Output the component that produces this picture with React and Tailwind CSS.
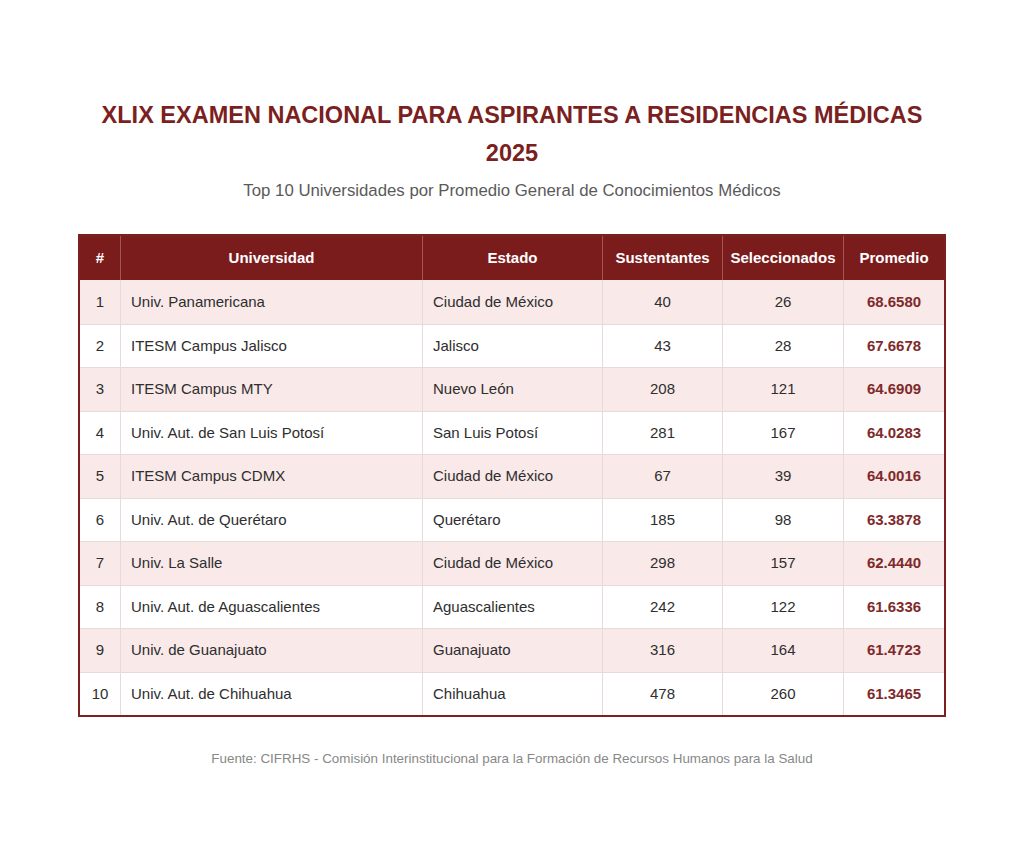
import React from "react";

const rows = [
  ["1", "Univ. Panamericana", "Ciudad de México", "40", "26", "68.6580"],
  ["2", "ITESM Campus Jalisco", "Jalisco", "43", "28", "67.6678"],
  ["3", "ITESM Campus MTY", "Nuevo León", "208", "121", "64.6909"],
  ["4", "Univ. Aut. de San Luis Potosí", "San Luis Potosí", "281", "167", "64.0283"],
  ["5", "ITESM Campus CDMX", "Ciudad de México", "67", "39", "64.0016"],
  ["6", "Univ. Aut. de Querétaro", "Querétaro", "185", "98", "63.3878"],
  ["7", "Univ. La Salle", "Ciudad de México", "298", "157", "62.4440"],
  ["8", "Univ. Aut. de Aguascalientes", "Aguascalientes", "242", "122", "61.6336"],
  ["9", "Univ. de Guanajuato", "Guanajuato", "316", "164", "61.4723"],
  ["10", "Univ. Aut. de Chihuahua", "Chihuahua", "478", "260", "61.3465"],
];

const cols = "grid grid-cols-[40px_302px_180px_120px_121px_101px]";

export default function App() {
  return (
    <div className="w-[1024px] h-[844px] bg-white flex flex-col items-center font-['Liberation_Sans',Arial,sans-serif]">
      <h1 className="mt-[96px] text-center text-[23.5px] leading-[38px] font-bold text-[#7b1f1f]">
        XLIX EXAMEN NACIONAL PARA ASPIRANTES A RESIDENCIAS MÉDICAS
        <br />
        2025
      </h1>
      <p className="mt-[7px] text-[16.8px] leading-[24px] text-[#5a5a5a]">
        Top 10 Universidades por Promedio General de Conocimientos Médicos
      </p>
      <div className="mt-[31px] w-[868px] border-2 border-[#7b1f1f] text-[15px] text-[#2e2e2e]">
        <div className={`${cols} h-[44px] bg-[#7b1c1c] text-white font-bold`}>
          <div className="flex items-center justify-center">#</div>
          <div className="flex items-center justify-center border-l border-[#a65555]">Universidad</div>
          <div className="flex items-center justify-center border-l border-[#a65555]">Estado</div>
          <div className="flex items-center justify-center border-l border-[#a65555]">Sustentantes</div>
          <div className="flex items-center justify-center border-l border-[#a65555]">Seleccionados</div>
          <div className="flex items-center justify-center border-l border-[#a65555]">Promedio</div>
        </div>
        {rows.map((r, i) => (
          <div
            key={r[0]}
            className={`${cols} h-[43.5px] ${i % 2 === 0 ? "bg-[#f9e9e9]" : "bg-white"} ${i > 0 ? "border-t border-[#e6dada]" : ""}`}
          >
            <div className="flex items-center justify-center">{r[0]}</div>
            <div className="flex items-center pl-[10px] border-l border-[#e6dada]">{r[1]}</div>
            <div className="flex items-center pl-[10px] border-l border-[#e6dada]">{r[2]}</div>
            <div className="flex items-center justify-center border-l border-[#e6dada]">{r[3]}</div>
            <div className="flex items-center justify-center border-l border-[#e6dada]">{r[4]}</div>
            <div className="flex items-center justify-center border-l border-[#e6dada] font-bold text-[#7f2a2a]">{r[5]}</div>
          </div>
        ))}
      </div>
      <p className="mt-[33px] text-[13.4px] leading-[18px] text-[#888]">
        Fuente: CIFRHS - Comisión Interinstitucional para la Formación de Recursos Humanos para la Salud
      </p>
    </div>
  );
}
